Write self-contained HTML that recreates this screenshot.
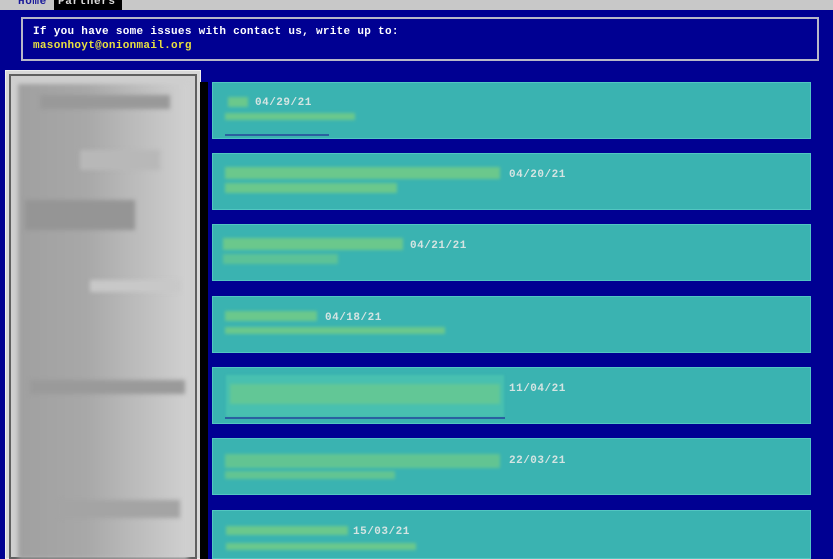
<!DOCTYPE html>
<html><head><style>
*{margin:0;padding:0;box-sizing:border-box}
body{width:833px;height:559px;overflow:hidden;background:#000092;position:relative;font-family:"Liberation Mono",monospace;font-weight:bold}
.a{position:absolute}
.top{left:0;top:0;width:833px;height:10px;background:#c8c8c8}
.tab{top:-3px;height:13px;font-size:11px;line-height:11px;padding:0 4px;letter-spacing:.6px}
.box{left:21px;top:17px;width:798px;height:44px;border:2px solid #b8b8c8}
.t{font-size:11px;color:#fff;white-space:pre;letter-spacing:.3px}
.card{left:212px;width:599px;height:57px;background:#3ab3b1;border:1px solid #52c6c2}
.d{font-size:11px;color:#d4e4e2;letter-spacing:.5px}
.b{position:absolute;background:#74cc86;filter:blur(1.5px);opacity:.85}
.c{position:absolute;background:#48c0b0;filter:blur(1px)}
.g{position:absolute;filter:blur(2px)}
</style></head><body>
<div class="a top"></div>
<div class="a tab" style="left:14px;color:#1a1a9a">Home</div>
<div class="a tab" style="left:54px;width:68px;background:#000;color:#ddd">Partners</div>
<div class="a box"></div>
<div class="a t" style="left:33px;top:26px">If you have some issues with contact us, write up to:</div>
<div class="a t" style="left:33px;top:40px;color:#e8e040">masonhoyt@onionmail.org</div>

<div class="a" style="left:5px;top:70px;width:196px;height:489px;background:#d8d8d8;border:1px solid #eee"></div>
<div class="a" style="left:9px;top:74px;width:188px;height:485px;border:2px solid #606060;background:#cfcfcf"></div>
<div class="a" style="left:18px;top:84px;width:170px;height:475px;background:linear-gradient(90deg,#a0a0a0 0%,#a8a8a8 40%,#bcbcbc 70%,#d0d0d0 100%);filter:blur(2px)"></div>
<div class="g" style="left:40px;top:95px;width:130px;height:14px;background:#999"></div>
<div class="g" style="left:80px;top:150px;width:80px;height:20px;background:#b8b8b8"></div>
<div class="g" style="left:25px;top:200px;width:110px;height:30px;background:#959595"></div>
<div class="g" style="left:90px;top:280px;width:90px;height:12px;background:#c8c8c8"></div>
<div class="g" style="left:30px;top:380px;width:155px;height:14px;background:#9a9a9a"></div>
<div class="g" style="left:60px;top:500px;width:120px;height:18px;background:#a4a4a4"></div>
<div class="a" style="left:200px;top:82px;width:8px;height:477px;background:#000"></div>

<div class="a card" style="top:82px"></div>
<div class="b" style="left:228px;top:97px;width:20px;height:10px"></div>
<div class="b" style="left:225px;top:113px;width:130px;height:7px"></div>
<div class="a" style="left:225px;top:134px;width:104px;height:2px;background:#2a60a0"></div>
<div class="a d" style="left:255px;top:97px">04/29/21</div>

<div class="a card" style="top:153px"></div>
<div class="b" style="left:225px;top:167px;width:275px;height:12px"></div>
<div class="b" style="left:225px;top:183px;width:172px;height:10px"></div>
<div class="a d" style="left:509px;top:169px">04/20/21</div>

<div class="a card" style="top:224px"></div>
<div class="b" style="left:223px;top:238px;width:180px;height:12px"></div>
<div class="b" style="left:223px;top:254px;width:115px;height:10px;opacity:.6"></div>
<div class="a d" style="left:410px;top:240px">04/21/21</div>

<div class="a card" style="top:296px"></div>
<div class="b" style="left:225px;top:311px;width:92px;height:10px"></div>
<div class="b" style="left:225px;top:327px;width:220px;height:7px"></div>
<div class="a d" style="left:325px;top:312px">04/18/21</div>

<div class="a card" style="top:367px"></div>
<div class="c" style="left:226px;top:375px;width:278px;height:42px"></div>
<div class="b" style="left:230px;top:384px;width:270px;height:20px;opacity:.6"></div>
<div class="a" style="left:225px;top:417px;width:280px;height:2px;background:#2a60a0"></div>
<div class="a d" style="left:509px;top:383px">11/04/21</div>

<div class="a card" style="top:438px"></div>
<div class="b" style="left:225px;top:454px;width:275px;height:14px;opacity:.7"></div>
<div class="b" style="left:225px;top:471px;width:170px;height:8px;opacity:.7"></div>
<div class="a d" style="left:509px;top:455px">22/03/21</div>

<div class="a card" style="top:510px;height:49px"></div>
<div class="b" style="left:226px;top:526px;width:122px;height:9px"></div>
<div class="b" style="left:226px;top:543px;width:190px;height:7px"></div>
<div class="a d" style="left:353px;top:526px">15/03/21</div>
</body></html>
